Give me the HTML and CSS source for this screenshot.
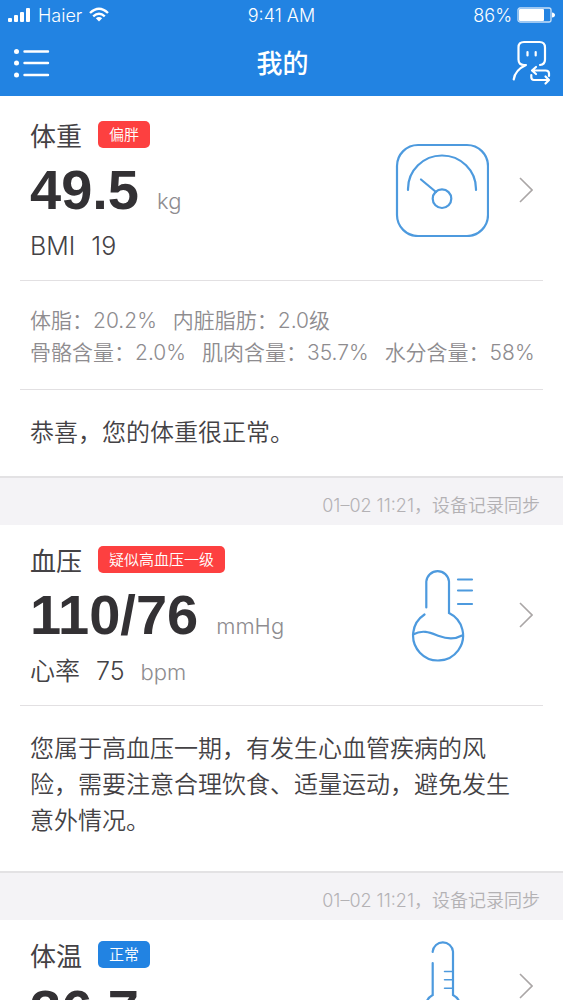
FILE: index.html
```html
<!DOCTYPE html>
<html lang="zh-CN">
<head>
<meta charset="utf-8">
<meta name="viewport" content="width=device-width, initial-scale=1">
<title>我的</title>
<link rel="stylesheet" href="styles.css">
</head>
<body>
<div class="app">
  <header class="header">
    <div class="status">
      <div class="status-left">
        <svg width="23" height="16" viewBox="0 0 23 16" fill="currentColor" aria-hidden="true">
          <rect x="0" y="11" width="4" height="4" rx="1"/><rect x="6" y="8" width="4" height="7" rx="1"/><rect x="12" y="5" width="4" height="10" rx="1"/><rect x="18" y="1" width="4" height="14" rx="1"/>
        </svg>
        <span>Haier</span>
        <svg width="20" height="16" viewBox="0 0 20 16" fill="none" stroke="currentColor" stroke-width="2.4" aria-hidden="true">
          <path d="M1 6Q10-2.500 19 6M4.200 9.300Q10 4 15.800 9.300"/>
          <path d="M10 14.500L6.800 11.300Q10 8.600 13.200 11.300Z" fill="currentColor" stroke="none"/>
        </svg>
      </div>
      <span>9:41 AM</span>
      <div class="status-right">
        <span>86%</span>
        <svg width="38" height="16" viewBox="0 0 38 16" aria-hidden="true">
          <rect x="1" y="1" width="33" height="14" rx="2" fill="none" stroke="currentColor" stroke-opacity=".75" stroke-width="1.300"/>
          <rect x="2" y="2" width="25" height="12" rx="1" fill="currentColor"/>
          <path d="M35 5.500q3 .5 3 2.500t-3 2.500z" fill="currentColor"/>
        </svg>
      </div>
    </div>
    <nav class="nav">
      <button class="nav-button" type="button" aria-label="菜单">
        <svg width="36" height="30" viewBox="0 0 36 30" stroke="currentColor" stroke-width="2.400" stroke-linecap="round" aria-hidden="true">
          <path d="M10.500 3.500H34M10.500 15H34M10.500 27H34"/>
          <g fill="currentColor" stroke="none"><circle cx="2.500" cy="3.500" r="2.500"/><circle cx="2.500" cy="15" r="2.500"/><circle cx="2.500" cy="27" r="2.500"/></g>
        </svg>
      </button>
      <h1 class="nav-title">我的</h1>
      <button class="nav-button nav-button-end" type="button" aria-label="切换用户">
        <svg width="40" height="46" viewBox="0 0 40 46" fill="none" stroke="currentColor" stroke-width="2.200" stroke-linecap="round" stroke-linejoin="round" aria-hidden="true">
          <path d="M2.700 39.500Q4 30 15 25H13Q7.500 25 7.500 19.500V7.500Q7.500 2 13 2H28.500Q34 2 34 7.500V19.500Q34 24.500 29 25"/>
          <path d="M16.500 12V15.500M24.700 12V15.500"/>
          <path d="M21.500 30.500H34.500Q38 30.500 38 33.500V36M25 27L21 30.500L25 34M20.300 35V37Q20.300 40 23 40H37M34.500 36.500L38 40L34.500 43.500"/>
        </svg>
      </button>
    </nav>
  </header>

  <main class="feed">
    <section class="card">
      <a class="summary" href="#weight">
        <div class="metric">
          <div class="metric-head"><h2 class="metric-title">体重</h2><span class="tag">偏胖</span></div>
          <div class="metric-value"><strong class="number">49.5</strong><span class="unit">kg</span></div>
          <div class="metric-sub"><span>BMI</span><span>19</span></div>
        </div>
        <svg class="metric-icon" viewBox="0 0 94 94" aria-hidden="true">
          <rect x="2" y="2" width="91" height="91" rx="21"/>
          <path d="M13 47V46A34 33.500 0 0 1 81 46V47M26 36.500L41 49"/><circle cx="47" cy="55.700" r="9.300"/>
        </svg>
        <svg class="chevron" viewBox="0 0 14 26" aria-hidden="true"><path d="M1 1L13 13L1 25"/></svg>
      </a>
      <div class="stats">
        <div class="stats-row"><span>体脂：20.2%</span><span>内脏脂肪：2.0级</span></div>
        <div class="stats-row"><span>骨骼含量：2.0%</span><span>肌肉含量：35.7%</span><span>水分含量：58%</span></div>
      </div>
      <p class="advice">恭喜，您的体重很正常。</p>
      <footer class="sync">01–02 11:21，设备记录同步</footer>
    </section>

    <section class="card">
      <a class="summary" href="#pressure">
        <div class="metric">
          <div class="metric-head"><h2 class="metric-title">血压</h2><span class="tag">疑似高血压一级</span></div>
          <div class="metric-value"><strong class="number">110/76</strong><span class="unit">mmHg</span></div>
          <div class="metric-sub"><span>心率</span><span>75</span><span class="unit">bpm</span></div>
        </div>
        <svg class="metric-icon" viewBox="0 0 94 94" aria-hidden="true">
          <path d="M31.300 39.500V13.500A11.400 11.400 0 0 1 54 13.500V45A25 25 0 1 1 29.500 46.500M18 66.500C28 61 36 65 44 68S59 72 67 67.500"/>
          <path d="M63 11.500H77M63 22.500H77M63 36H77"/>
        </svg>
        <svg class="chevron" viewBox="0 0 14 26" aria-hidden="true"><path d="M1 1L13 13L1 25"/></svg>
      </a>
      <p class="advice advice-long">您属于高血压一期，有发生心血管疾病的风险，需要注意合理饮食、适量运动，避免发生意外情况。</p>
      <footer class="sync">01–02 11:21，设备记录同步</footer>
    </section>

    <section class="card">
      <a class="summary summary-compact" href="#temperature">
        <div class="metric">
          <div class="metric-head"><h2 class="metric-title">体温</h2><span class="tag tag-normal">正常</span></div>
          <div class="metric-value"><strong class="number">36.7</strong></div>
        </div>
        <svg class="metric-icon" viewBox="0 0 94 94" aria-hidden="true">
          <path d="M37.700 13V12.500A10.200 10.200 0 0 1 58 12.500V56Q66 60 66 72A18 18 0 0 1 30 72Q30 60 37.700 56V24"/>
          <path d="M49.500 32.500H58M49.500 40.700H58M49.500 49.300H58" stroke-width="1.500"/>
        </svg>
        <svg class="chevron" viewBox="0 0 14 26" aria-hidden="true"><path d="M1 1L13 13L1 25"/></svg>
      </a>
    </section>
  </main>
</div>
</body>
</html>
```
FILE: styles.css
```css
* { box-sizing: border-box; }

body {
  margin: 0;
  background: #fff;
  color: #444245;
  font-family: Inter, "Noto Sans CJK SC", sans-serif;
  font-weight: 350;
}

h1, h2, p { margin: 0; }

.app {
  display: flex;
  flex-direction: column;
  height: 100vh;
}

.header {
  flex: none;
  background: #2283e2;
  color: #fff;
}

.status {
  display: grid;
  grid-template-columns: 1fr auto 1fr;
  align-items: center;
  height: 30px;
  padding: 0 8px;
  font-size: 18px;
}

.status-left,
.status-right {
  display: flex;
  align-items: center;
  gap: 7px;
}

.status-right { justify-content: flex-end; gap: 5px; }

.nav {
  display: grid;
  grid-template-columns: 1fr auto 1fr;
  align-items: center;
  height: 66px;
  padding: 0 12px 0 14px;
}

.nav-title {
  padding-top: 2px;
  font-size: 26px;
  font-weight: 500;
  line-height: 32px;
}

.nav-button {
  display: flex;
  justify-self: start;
  padding: 0;
  border: 0;
  background: none;
  color: inherit;
}

.nav-button-end { justify-self: end; }

.feed {
  flex: 1;
  min-height: 0;
  padding-top: 4px;
  overflow-y: auto;
  scrollbar-width: none;
}

.summary {
  display: flex;
  align-items: center;
  gap: 30px;
  margin: 0 20px;
  padding: 16px 10px;
  color: inherit;
  text-decoration: none;
}

.summary-compact { padding-top: 4px; }

.summary-compact .metric { padding-top: 12px; }

.metric { flex: 1; }

.metric-head {
  display: flex;
  align-items: center;
  gap: 16px;
  height: 36px;
}

.metric-title {
  font-size: 26px;
  font-weight: 400;
}

.tag {
  padding: 0 11px;
  border-radius: 5px;
  background: #fd4040;
  color: #fff;
  font-size: 15px;
  line-height: 27px;
}

.tag-normal { background: #2283e2; }

.metric-value {
  display: flex;
  align-items: baseline;
  gap: 18px;
}

.number {
  color: #333134;
  font-family: "Liberation Sans", Arial, sans-serif;
  font-size: 56px;
  font-weight: 700;
  line-height: 76px;
}

.unit {
  color: #8e8c8f;
  font-size: 22px;
  line-height: 24px;
}

.metric-sub {
  display: flex;
  align-items: baseline;
  gap: 16px;
  height: 36px;
  font-size: 25px;
  line-height: 36px;
}

.metric-icon {
  flex: none;
  width: 94px;
  height: 94px;
  fill: none;
  stroke: #4d9ade;
  stroke-width: 2.2;
  stroke-linecap: round;
}

.chevron {
  flex: none;
  width: 14px;
  height: 26px;
  fill: none;
  stroke: #aaa6a6;
  stroke-width: 1.6;
}

.stats,
.advice {
  margin: 0 20px;
  border-top: 1px solid #e2e0e2;
}

.stats {
  padding: 24px 0 20px 10px;
  color: #8e8c8f;
  font-size: 21px;
  line-height: 32px;
}

.stats-row {
  display: flex;
  gap: 16px;
  white-space: nowrap;
}

.advice {
  padding: 25px 20px 25px 10px;
  font-size: 24px;
  line-height: 36px;
}

.advice-long { padding-bottom: 32px; }

.sync {
  padding: 14px 23px 6px;
  border-top: 2px solid #e3e2e4;
  background: #f4f3f6;
  color: #b3b1b4;
  font-size: 18px;
  line-height: 27px;
  text-align: right;
}
```
